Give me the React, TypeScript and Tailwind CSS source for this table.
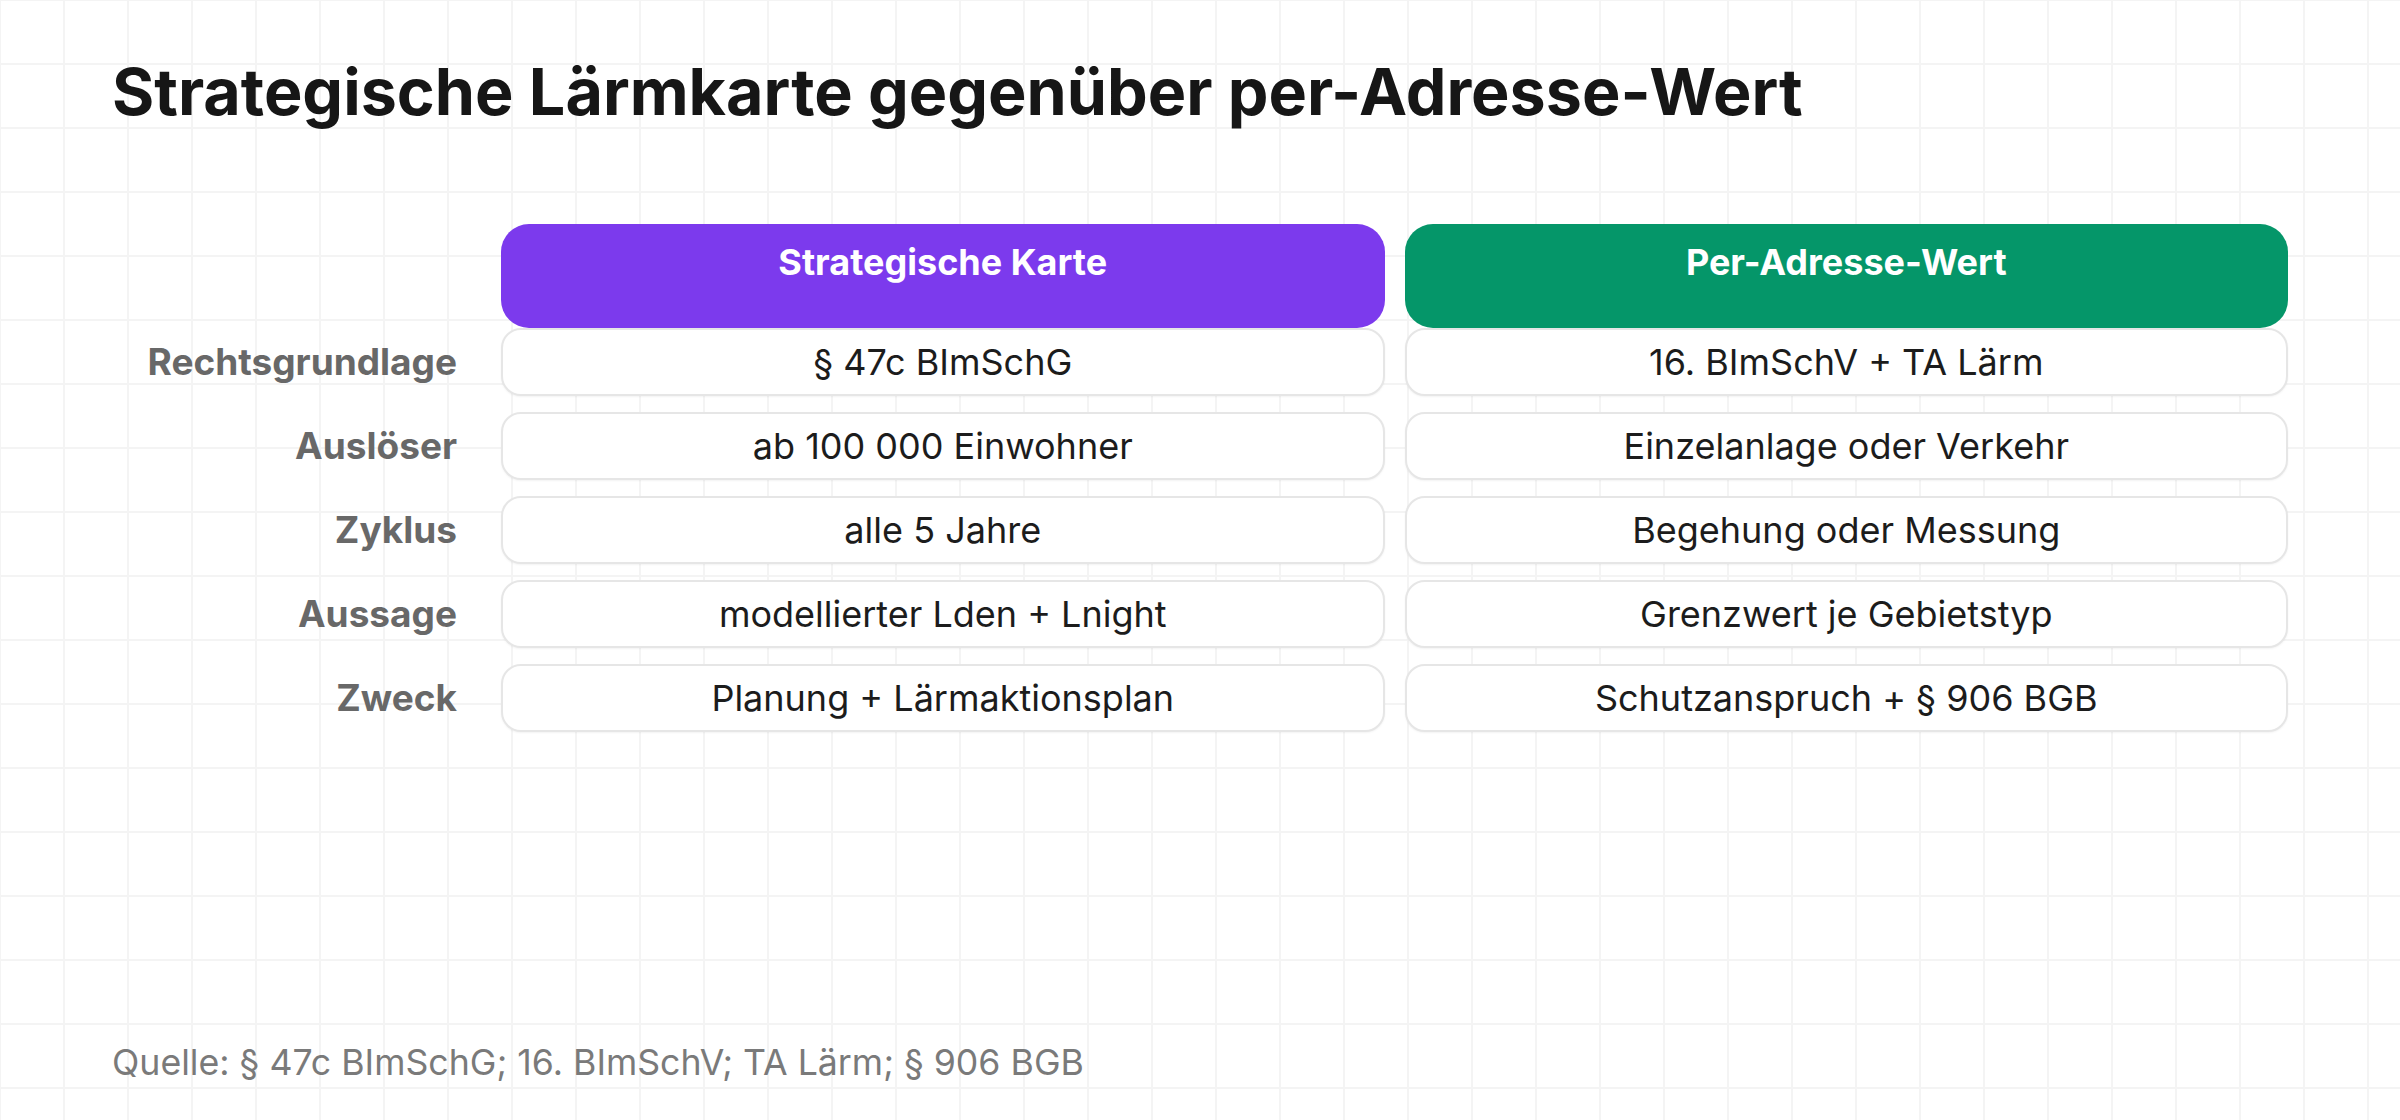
const rows: { label: string; left: string; right: string }[] = [
  { label: "Rechtsgrundlage", left: "§ 47c BImSchG", right: "16. BImSchV + TA Lärm" },
  { label: "Auslöser", left: "ab 100 000 Einwohner", right: "Einzelanlage oder Verkehr" },
  { label: "Zyklus", left: "alle 5 Jahre", right: "Begehung oder Messung" },
  { label: "Aussage", left: "modellierter Lden + Lnight", right: "Grenzwert je Gebietstyp" },
  { label: "Zweck", left: "Planung + Lärmaktionsplan", right: "Schutzanspruch + § 906 BGB" },
];

function Cell({ text }: { text: string }) {
  return (
    <div className="flex h-[68px] items-center justify-center rounded-[20px] border-2 border-[#e6e6e6] bg-white text-[36px] text-[#1c1c1c] shadow-[0_1px_2px_rgba(0,0,0,0.05)]">
      {text}
    </div>
  );
}

export default function App() {
  return (
    <div
      className="flex h-[1120px] w-[2400px] flex-col bg-white bg-[linear-gradient(to_right,#f4f4f4_2px,transparent_2px),linear-gradient(to_bottom,#f4f4f4_2px,transparent_2px)] bg-[size:64px_64px] bg-[position:-1px_-1px] px-[112px]"
      style={{ fontFamily: "Inter, 'Noto Sans', sans-serif" }}
    >
      {/* Title */}
      <h1 className="mt-[52px] text-[64.6px] leading-[80px] font-bold text-[#161616]">
        Strategische Lärmkarte gegenüber per-Adresse-Wert
      </h1>

      {/* Comparison table */}
      <div className="mt-[92px] grid grid-cols-[369px_1fr_1fr] gap-x-[20px]">
        <div />
        <div className="h-[104px] rounded-[28px] bg-[#7c3aed] pt-[14px] text-center text-[36px] leading-[48px] font-bold text-white">
          Strategische Karte
        </div>
        <div className="h-[104px] rounded-[28px] bg-[#059669] pt-[14px] text-center text-[36px] leading-[48px] font-bold text-white">
          Per-Adresse-Wert
        </div>
      </div>

      <div className="grid grid-cols-[369px_1fr_1fr] gap-x-[20px] gap-y-[16px]">
        {rows.map((r) => (
          <div key={r.label} className="contents">
            <div className="flex h-[68px] items-center justify-end pr-[24px] text-[37px] font-bold text-[#686868]">
              {r.label}
            </div>
            <Cell text={r.left} />
            <Cell text={r.right} />
          </div>
        ))}
      </div>

      {/* Source */}
      <div className="mt-auto mb-[36px] text-[35.7px] leading-[44px] text-[#7a7a7a]">
        Quelle: § 47c BImSchG; 16. BImSchV; TA Lärm; § 906 BGB
      </div>
    </div>
  );
}
